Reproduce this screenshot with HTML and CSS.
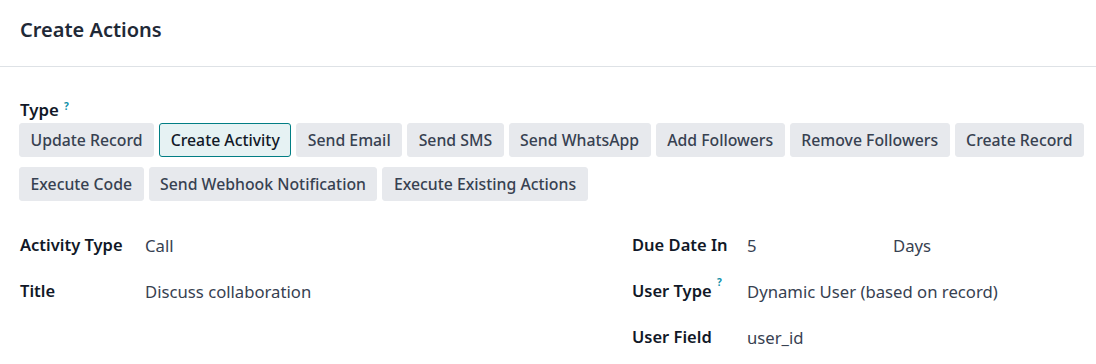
FILE: index.html
```html
<!DOCTYPE html>
<html>
<head>
<meta charset="utf-8">
<link rel="stylesheet" href="styles.css">
</head>
<body>
<div class="header"><h1 class="title">Create Actions</h1></div>
<div class="content">
  <div class="type-label">Type <sup class="help">?</sup></div>
  <div class="btns">
    <span class="btn">Update Record</span>
    <span class="btn active">Create Activity</span>
    <span class="btn">Send Email</span>
    <span class="btn">Send SMS</span>
    <span class="btn">Send WhatsApp</span>
    <span class="btn">Add Followers</span>
    <span class="btn">Remove Followers</span>
    <span class="btn">Create Record</span>
    <span class="btn">Execute Code</span>
    <span class="btn">Send Webhook Notification</span>
    <span class="btn">Execute Existing Actions</span>
  </div>
  <div class="fields">
    <div class="group left">
      <div class="row"><div class="lbl">Activity Type</div><div class="val">Call</div></div>
      <div class="row"><div class="lbl">Title</div><div class="val">Discuss collaboration</div></div>
    </div>
    <div class="group right">
      <div class="row"><div class="lbl">Due Date In</div><div class="val"><span class="num">5</span><span>Days</span></div></div>
      <div class="row"><div class="lbl">User Type <sup class="help">?</sup></div><div class="val">Dynamic User (based on record)</div></div>
      <div class="row"><div class="lbl">User Field</div><div class="val">user_id</div></div>
    </div>
  </div>
</div>
</body>
</html>
```
FILE: styles.css
```css
* { box-sizing: border-box; }
body {
  margin: 0;
  background: #fff;
  font-family: "Noto Sans", "Open Sans", sans-serif;
  color: #111827;
}
.header {
  height: 67px;
  border-bottom: 1px solid #dee2e6;
  padding: 0 20px;
  display: flex;
  align-items: center;
}
.title {
  margin: 0;
  font-size: 20px;
  font-weight: 600;
  color: #1f2937;
  position: relative;
  top: -4px;
}
.content {
  padding: 32px 8px 0 19px;
}
.type-label {
  font-size: 16.8px;
  font-weight: 600;
  padding-left: 1px;
  line-height: 22px;
}
.help {
  color: #0d8fa8;
  font-size: 10px;
  font-weight: 700;
  vertical-align: top;
  position: relative;
  top: -4px;
  margin-left: 1px;
}
.btns {
  display: flex;
  flex-wrap: wrap;
  gap: 10px 5px;
  margin-top: 2px;
}
.btn {
  height: 34px;
  padding: 0 10.5px;
  display: flex;
  align-items: center;
  background: #e7e9ed;
  border: 1px solid #e7e9ed;
  border-radius: 3px;
  font-size: 15.8px;
  font-weight: 500;
  color: #374151;
}
.btn.active {
  background: #e6f2f3;
  border-color: #017e84;
  color: #111827;
}
.fields {
  display: grid;
  grid-template-columns: 612px 1fr;
  margin-top: 32px;
}
.row {
  display: flex;
  height: 46px;
  align-items: flex-start;
}
.left .lbl { width: 126px; }
.right .lbl { width: 116px; }
.lbl {
  font-size: 16.5px;
  font-weight: 600;
  color: #111827;
  padding-left: 1px;
}
.val {
  font-size: 16.7px;
  color: #374151;
  padding-top: 1px;
  display: flex;
}
.num { width: 146px; }
```
